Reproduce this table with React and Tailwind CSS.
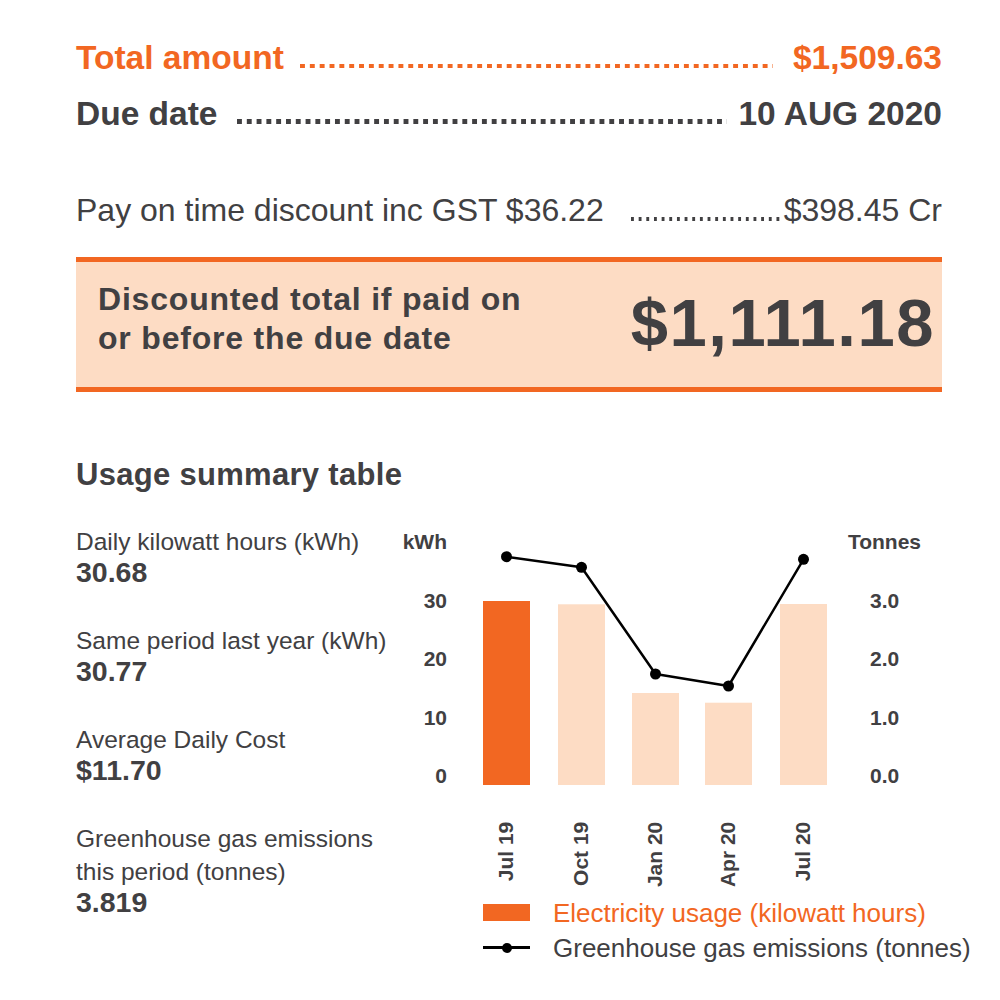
const bars = [
  { label: "Jul 19", x: 93, top: 76, current: true },
  { label: "Oct 19", x: 168, top: 79.3 },
  { label: "Jan 20", x: 242, top: 168 },
  { label: "Apr 20", x: 315, top: 177.7 },
  { label: "Jul 20", x: 390, top: 79 },
];

// emissions line, in chart coords
const points = [
  [116.5, 31.7],
  [191.5, 42.3],
  [265.5, 149],
  [338.5, 161],
  [413.5, 34.3],
];

const ticks = [
  { left: "30", right: "3.0", y: 82.7 },
  { left: "20", right: "2.0", y: 141 },
  { left: "10", right: "1.0", y: 200 },
  { left: "0", right: "0.0", y: 258.3 },
];

const stats = [
  { label: ["Daily kilowatt hours (kWh)"], value: "30.68" },
  { label: ["Same period last year (kWh)"], value: "30.77" },
  { label: ["Average Daily Cost"], value: "$11.70" },
  { label: ["Greenhouse gas emissions", "this period (tonnes)"], value: "3.819" },
];

const UsageChart = () => {
  return (
    <svg
      width="550"
      height="370"
      className="block overflow-visible"
      fontFamily="'Liberation Sans', Arial, sans-serif"
    >
      <text x="57" y="24.3" textAnchor="end" fontSize="21" fontWeight="700" fill="#414042">
        kWh
      </text>
      <text x="531" y="24.3" textAnchor="end" fontSize="21" fontWeight="700" fill="#414042">
        Tonnes
      </text>

      {ticks.map((t) => (
        <g key={t.left} fontSize="21" fontWeight="700" fill="#414042">
          <text x="57" y={t.y} textAnchor="end">
            {t.left}
          </text>
          <text x="480" y={t.y}>
            {t.right}
          </text>
        </g>
      ))}

      {bars.map((b) => (
        <rect
          key={b.label}
          x={b.x}
          y={b.top}
          width="47"
          height={260 - b.top}
          fill={b.current ? "#f26722" : "#fddcc4"}
        />
      ))}

      <polyline
        points={points.map((p) => p.join(",")).join(" ")}
        fill="none"
        stroke="#000"
        strokeWidth="2.5"
        strokeLinejoin="round"
      />
      {points.map(([cx, cy]) => (
        <circle key={cx} cx={cx} cy={cy} r="5.5" fill="#000" />
      ))}

      {/* month labels, read bottom to top */}
      {bars.map((b) => {
        const x = b.x + 23.5 + 7;
        return (
          <text
            key={b.label}
            x={x}
            y="296.7"
            transform={`rotate(-90 ${x} 296.7)`}
            textAnchor="end"
            fontSize="21"
            fontWeight="700"
            fill="#414042"
          >
            {b.label}
          </text>
        );
      })}
    </svg>
  );
};

const App = () => {
  return (
    <div className="w-[1000px] min-h-[1000px] bg-white pl-[76px] pr-[58px] pt-[39px] font-['Liberation_Sans',Arial,sans-serif] text-[#414042]">
      {/* TOTAL */}
      <div className="flex text-[33.5px] leading-[38px] font-bold text-[#f26722]">
        <span className="whitespace-nowrap">Total amount</span>
        <span className="ml-[16px] flex-1 bg-[linear-gradient(to_right,#f26722_5px,transparent_5px)] bg-[length:9.8px_4px] bg-[position:0_25px] [background-repeat:space_no-repeat]" />
        <span className="ml-[20px] whitespace-nowrap">$1,509.63</span>
      </div>

      {/* DUE DATE */}
      <div className="mt-[18px] flex text-[33.5px] leading-[38px] font-bold">
        <span className="whitespace-nowrap">Due date</span>
        <span className="ml-[20px] flex-1 bg-[linear-gradient(to_right,#414042_4.7px,transparent_4.7px)] bg-[length:9.8px_4.5px] bg-[position:0_24px] [background-repeat:space_no-repeat]" />
        <span className="ml-[11px] whitespace-nowrap">10 AUG 2020</span>
      </div>

      {/* DISCOUNT */}
      <div className="mt-[59px] flex text-[32px] leading-[36px]">
        <span className="whitespace-nowrap">Pay on time discount inc GST $36.22</span>
        <span className="ml-[27px] flex-1 bg-[linear-gradient(to_right,#414042_2.5px,transparent_2.5px)] bg-[length:7.5px_4px] bg-[position:0_25px] [background-repeat:space_no-repeat]" />
        <span className="ml-[0px] whitespace-nowrap">$398.45 Cr</span>
      </div>

      <div className="mt-[29px] flex h-[135px] justify-between border-y-[5px] border-[#f26722] bg-[#fddcc4] pl-[22px] pr-[7px] pt-[18px]">
        <div className="text-[32px] leading-[38.6px] font-bold tracking-[0.8px]">
          Discounted total if paid on
          <br />
          or before the due date
        </div>
        <div className="mt-[9px] text-[67px] leading-[67px] font-bold tracking-[1.5px] whitespace-nowrap">
          $1,111.18
        </div>
      </div>

      {/* USAGE */}
      <h2 className="mt-[65px] text-[31px] leading-[36px] font-bold tracking-[0.3px]">Usage summary table</h2>

      <div className="mt-[32px] flex items-start">
        <div className="flex w-[314px] shrink-0 flex-col gap-[35px]">
          {stats.map((s) => (
            <div key={s.value} className="flex flex-col">
              {s.label.map((l) => (
                <span key={l} className="text-[24.5px] leading-[33px] whitespace-nowrap">
                  {l}
                </span>
              ))}
              <span className="-mt-[2px] text-[28.5px] leading-[33px] font-bold">{s.value}</span>
            </div>
          ))}
        </div>

        <div className="flex flex-col">
          <UsageChart />
          <div className="flex flex-col pl-[93px]">
            <div className="flex h-[35px] items-center">
              <span className="h-[17px] w-[47px] shrink-0 bg-[#f26722]" />
              <span className="ml-[23px] text-[26px] leading-[30px] whitespace-nowrap text-[#f26722]">
                Electricity usage (kilowatt hours)
              </span>
            </div>
            <div className="flex h-[35px] items-center">
              <span className="relative h-[2.5px] w-[47px] shrink-0 bg-black">
                <span className="absolute left-1/2 top-1/2 h-[10px] w-[10px] -translate-x-1/2 -translate-y-1/2 rounded-full bg-black" />
              </span>
              <span className="ml-[23px] text-[26px] leading-[30px] whitespace-nowrap">
                Greenhouse gas emissions (tonnes)
              </span>
            </div>
          </div>
        </div>
      </div>
    </div>
  );
};

export default App;
